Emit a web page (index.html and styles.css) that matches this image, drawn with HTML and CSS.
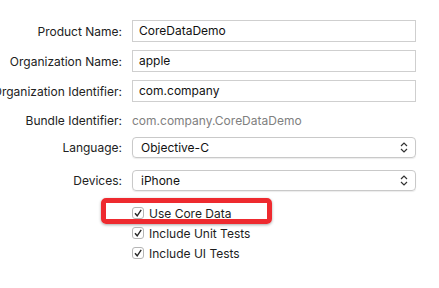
FILE: index.html
```html
<!DOCTYPE html>
<html lang="en">
<head>
    <meta charset="UTF-8">
    <meta name="viewport" content="width=device-width, initial-scale=1.0">
    <title>Project Options</title>
    <link rel="stylesheet" href="styles.css">
</head>
<body>
    <div class="sheet">
        <div class="row row-first">
            <div class="label"><span>Product Name:</span></div>
            <div class="field">CoreDataDemo</div>
        </div>
        <div class="row">
            <div class="label"><span>Organization Name:</span></div>
            <div class="field">apple</div>
        </div>
        <div class="row">
            <div class="label"><span>Organization Identifier:</span></div>
            <div class="field">com.company</div>
        </div>
        <div class="row row-bundle">
            <div class="label"><span>Bundle Identifier:</span></div>
            <div class="static">com.company.CoreDataDemo</div>
        </div>
        <div class="row row-lang">
            <div class="label"><span>Language:</span></div>
            <div class="popup">
                <span>Objective-C</span>
                <svg class="arrows" width="8" height="11" viewBox="0 0 8 11">
                    <path d="M1 4 L4 1 L7 4 M1 7 L4 10 L7 7" fill="none" stroke="#333" stroke-width="1.2"/>
                </svg>
            </div>
        </div>
        <div class="row row-devices">
            <div class="label"><span>Devices:</span></div>
            <div class="popup">
                <span>iPhone</span>
                <svg class="arrows" width="8" height="11" viewBox="0 0 8 11">
                    <path d="M1 4 L4 1 L7 4 M1 7 L4 10 L7 7" fill="none" stroke="#333" stroke-width="1.2"/>
                </svg>
            </div>
        </div>

        <div class="checks">
            <div class="check">
                <span class="box">
                    <svg width="10" height="10" viewBox="0 0 10 10">
                        <path d="M2 5.2 L4.2 7.8 L8.2 1.8" fill="none" stroke="#2a2a2a" stroke-width="1.4"/>
                    </svg>
                </span>
                <span>Use Core Data</span>
                <div class="annotation"></div>
            </div>
            <div class="check">
                <span class="box">
                    <svg width="10" height="10" viewBox="0 0 10 10">
                        <path d="M2 5.2 L4.2 7.8 L8.2 1.8" fill="none" stroke="#2a2a2a" stroke-width="1.4"/>
                    </svg>
                </span>
                <span>Include Unit Tests</span>
            </div>
            <div class="check">
                <span class="box">
                    <svg width="10" height="10" viewBox="0 0 10 10">
                        <path d="M2 5.2 L4.2 7.8 L8.2 1.8" fill="none" stroke="#2a2a2a" stroke-width="1.4"/>
                    </svg>
                </span>
                <span>Include UI Tests</span>
            </div>
        </div>
    </div>
</body>
</html>
```
FILE: styles.css
```css
body {
    margin: 0;
    background-color: #ffffff;
    color: #1d1d1d;
    font-family: Inter, "Liberation Sans", sans-serif;
    font-size: 12px;
}
.sheet {
    padding-top: 20px;
    width: 439px;
    height: 288px;
    box-sizing: border-box;
    overflow: hidden;
}
.row {
    display: flex;
    align-items: center;
    margin-top: 8px;
    height: 22px;
}
.row-first {
    margin-top: 0;
}
.row-bundle {
    height: 21px;
}
.row-lang {
    margin-top: 6px;
    height: 21px;
}
.row-devices {
    margin-top: 12px;
    height: 21px;
}
.label {
    width: 122px;
    flex-shrink: 0;
    display: flex;
    justify-content: flex-end;
    white-space: nowrap;
    color: #222;
}
.field {
    margin-left: 10px;
    width: 284px;
    height: 22px;
    box-sizing: border-box;
    border: 1px solid #cfcfcf;
    padding: 0 6px;
    line-height: 20px;
    color: #111;
}
.static {
    margin-left: 10px;
    color: #808080;
}
.popup {
    margin-left: 10px;
    width: 284px;
    height: 21px;
    box-sizing: border-box;
    border: 1px solid #c9c9c9;
    border-radius: 4px;
    box-shadow: 0 1px 1px rgba(0, 0, 0, 0.08);
    padding: 0 8px;
    display: flex;
    align-items: center;
    justify-content: space-between;
    color: #111;
}
.arrows {
    margin-right: -1px;
}
.checks {
    margin-top: 12px;
    margin-left: 132px;
}
.check {
    position: relative;
    display: flex;
    align-items: center;
    height: 20px;
    color: #1d1d1d;
}
.box {
    width: 12px;
    height: 12px;
    box-sizing: border-box;
    border: 1px solid #b5b5b5;
    border-radius: 3px;
    margin-right: 5px;
    display: flex;
    align-items: center;
    justify-content: center;
}
.annotation {
    position: absolute;
    left: -31px;
    top: -5px;
    width: 171px;
    height: 26px;
    box-sizing: border-box;
    border: 5px solid #ee2a2f;
    border-radius: 5px;
    box-shadow: 0 1px 3px rgba(0, 0, 0, 0.35);
}
```
